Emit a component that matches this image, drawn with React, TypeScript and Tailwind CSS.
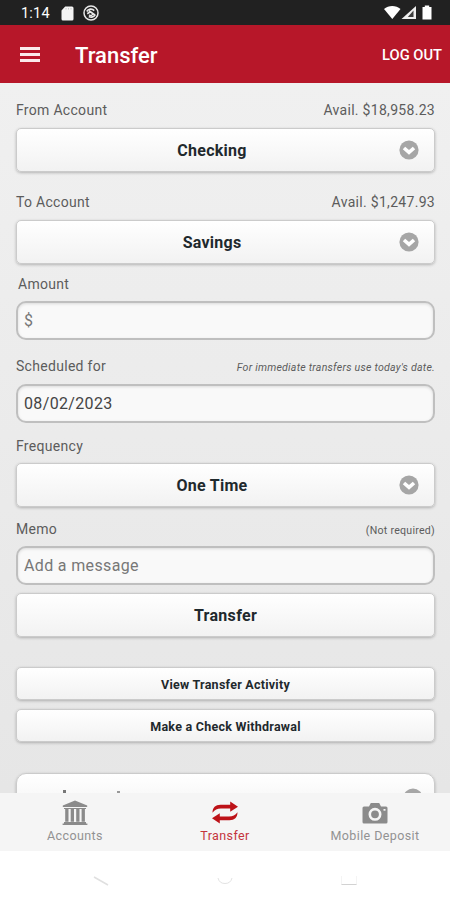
import type { ReactNode } from 'react';

const buttonBase =
  'relative flex w-full items-center justify-center border border-[#cbcbcb] bg-linear-to-b from-white to-[#f2f2f2] font-bold text-[#1f292d] shadow-[0_1px_3px_rgba(0,0,0,0.25)]';

const inputBase =
  'block h-[39px] w-full rounded-[10px] border-2 border-[#bfbfbf] bg-[#f9f9f9] px-1.5 text-[16px] tracking-[0.35px] text-[#444] shadow-[inset_0_1px_3px_rgba(0,0,0,0.12)] outline-none placeholder:text-[#777]';

function ChevronCircle() {
  return (
    <svg className="h-5 w-5" viewBox="0 0 20 20">
      <circle cx="10" cy="10" r="9.6" fill="#a6a6a6" />
      <path d="M5 8 10 12.4 15 8" fill="none" stroke="#fff" strokeWidth="3.6" />
    </svg>
  );
}

// Row above a field, with an optional note on the right
function LabelRow({ label, children }: { label: string; children?: ReactNode }) {
  return (
    <div className="flex h-5 items-center justify-between text-[14px] tracking-[0.3px] text-[#5c5c5c]">
      <span>{label}</span>
      {children}
    </div>
  );
}

function SelectButton({ value }: { value: string }) {
  return (
    <button className={`${buttonBase} h-11 rounded-[5px] pr-[27px] pt-0.5 text-[16px] tracking-[0.25px]`}>
      {value}
      <span className="absolute right-[15px] top-[11px]">
        <ChevronCircle />
      </span>
    </button>
  );
}

function StatusBar() {
  return (
    <div className="flex h-[25px] shrink-0 items-center bg-[#212121] pl-[21px] pr-[17px] text-white">
      <span className="w-[40px] pt-0.5 text-[14.5px] tracking-[0.2px]">1:14</span>
      <svg className="mt-px h-[15px] w-[13px]" viewBox="0 0 13 15">
        <path d="M4.2 0.5H11a1.5 1.5 0 0 1 1.5 1.5v11a1.5 1.5 0 0 1-1.5 1.5H2A1.5 1.5 0 0 1 .5 13V4.4z" fill="#f5f5f5" />
        <path d="M5 2v1.5M7.5 2v1.5M10 2v1.5" stroke="#bbb" strokeWidth=".8" />
      </svg>
      <svg className="ml-[9px] h-4 w-4" viewBox="0 0 16 16" fill="none" stroke="#e8e8e8">
        <circle cx="8" cy="8" r="7" strokeWidth="1.5" />
        <path d="M3.8 6.5C5.2 4 9 3.2 11.2 5.6M12.2 9.6c-1.2 2.4-4 3.2-6.4 1.8M4.2 8.8l2.4-1.6M6 5.8l6.2 4.4" strokeWidth="1.7" />
        <path d="M9.8 8.2a2.2 2.2 0 0 1-3.8 1.6" strokeWidth="1.3" />
      </svg>
      <svg className="ml-auto h-[15px] w-[50px]" viewBox="0 0 50 15">
        <path d="M1 3.9C5.5-.1 13-.1 17.5 3.9L9.3 14z" fill="#fff" />
        <path d="M33 1v13H18.5z" fill="#eee" />
        <path d="M30.5 5.5V12h-5.7z" fill="#3c3c3c" />
        <path d="M39.5 2h2.3V.5h4.4V2h2.3v12.5h-9z" fill="#fff" />
      </svg>
    </div>
  );
}

function Header() {
  return (
    <header className="flex h-[58px] shrink-0 items-center bg-[#b71729] pl-5 pr-2 text-white">
      <button className="flex w-5 flex-col gap-[3px]" aria-label="Menu">
        <span className="h-[3px] bg-[#fbe9ea]" />
        <span className="h-[3px] bg-[#fbe9ea]" />
        <span className="h-[3px] bg-[#fbe9ea]" />
      </button>
      <h1 className="ml-[35px] mt-0.5 text-[22px] font-medium">Transfer</h1>
      <button className="ml-auto mt-0.5 text-[14.7px] font-medium">LOG OUT</button>
    </header>
  );
}

function BankIcon() {
  return (
    <svg className="h-[26px] w-[26px]" viewBox="0 0 26 26" fill="#8b8b8b">
      <path d="M13 .5 25.2 5.5V7H.8V5.5zM2 8h22v1H2zM3.2 9h3.3v12.7H3.2zM8.7 9H12v12.7H8.7zM14.2 9h3.3v12.7h-3.3zM19.6 9h3.3v12.7h-3.3zM2 22h22v1.5H2zM.6 23.500h24.8V25H.6z" />
    </svg>
  );
}

function TransferIcon() {
  return (
    <svg className="h-[26px] w-[28px]" viewBox="0 0 28 26" fill="#bd1218">
      <path d="M1.5 12.800C1.5 7.500 4.500 4.800 9.500 4.800h9.700V1.500L27 6.800l-7.800 5V8.600H10C6 8.600 4 9.800 1.500 12.800z" />
      <path d="M26.5 12.200c0 5.300-3 8-8 8H8.800v3.300L1 18.200l7.800-5v3.200H18c4 0 6-1.200 8.500-4.200z" />
    </svg>
  );
}

function CameraIcon() {
  return (
    <svg className="h-[26px] w-[26px]" viewBox="0 0 26 26">
      <path d="M2 6.500h5L8.800 3h8.400L19 6.500h5A1.500 1.500 0 0 1 25.500 8v14a1.500 1.500 0 0 1-1.500 1.500H2A1.500 1.500 0 0 1 .5 22V8A1.500 1.500 0 0 1 2 6.500z" fill="#8b8b8b" />
      <circle cx="13" cy="14.300" r="5.200" fill="none" stroke="#f5f5f5" strokeWidth="2.600" />
      <path d="M21.500 9h2v1.700h-2z" fill="#f5f5f5" />
    </svg>
  );
}

function Tab({ label, icon, active }: { label: string; icon: ReactNode; active?: boolean }) {
  return (
    <button
      className={`flex flex-1 flex-col items-center pt-[7px] text-[12.5px] tracking-[0.4px] ${
        active ? 'text-[#c4343c]' : 'text-[#929292]'
      }`}
    >
      {icon}
      <span className="mt-px leading-[18px]">{label}</span>
    </button>
  );
}

export default function App() {
  return (
    <div className="flex h-[900px] w-[450px] flex-col overflow-hidden bg-white font-[Roboto,sans-serif]">
      <StatusBar />
      <Header />

      <main className="h-[710px] shrink-0 overflow-hidden bg-linear-to-b from-[#f0f0f0] to-[#e6e6e6] pl-4 pr-[15px] pt-[17px]">
        <LabelRow label="From Account">
          <span>Avail. $18,958.23</span>
        </LabelRow>
        <div className="mt-2">
          <SelectButton value="Checking" />
        </div>

        <div className="mt-5">
          <LabelRow label="To Account">
            <span>Avail. $1,247.93</span>
          </LabelRow>
        </div>
        <div className="mt-2">
          <SelectButton value="Savings" />
        </div>

        <div className="mt-2.5 pl-0.5">
          <LabelRow label="Amount" />
        </div>
        <div className="mt-[7px]">
          <input className={inputBase} placeholder="$" />
        </div>

        <div className="mt-4">
          <LabelRow label="Scheduled for">
            <span className="mt-[3px] text-[10.6px] italic tracking-[0.23px]">
              For immediate transfers use today's date.
            </span>
          </LabelRow>
        </div>
        <div className="mt-2">
          <input className={inputBase} defaultValue="08/02/2023" />
        </div>

        <div className="mt-[13px]">
          <LabelRow label="Frequency" />
        </div>
        <div className="mt-[7px]">
          <SelectButton value="One Time" />
        </div>

        <div className="mt-3">
          <LabelRow label="Memo">
            <span className="mt-[3px] text-[10.6px] tracking-[0.25px]">(Not required)</span>
          </LabelRow>
        </div>
        <div className="mt-[7px]">
          <input className={inputBase} placeholder="Add a message" />
        </div>

        <button className={`${buttonBase} mt-2 h-11 rounded-[5px] pt-0.5 text-[16px] tracking-[0.3px]`}>
          Transfer
        </button>
        <button className={`${buttonBase} mt-[30px] h-[33px] rounded-[5px] pt-1 text-[12.5px] tracking-[0.25px]`}>
          View Transfer Activity
        </button>
        <button className={`${buttonBase} mt-[9px] h-[33px] rounded-[5px] pt-1 text-[12.5px] tracking-[0.25px]`}>
          Make a Check Withdrawal
        </button>

        {/* Next section, mostly hidden behind the tab bar */}
        <div className={`${buttonBase} mt-[31px] h-11 rounded-[10px]`}>
          <span className="absolute left-[46px] top-4 h-3 w-[3px] bg-[#777]" />
          <span className="absolute left-[100px] top-[17px] h-3 w-[3px] bg-[#999]" />
          <span className="absolute right-[11px] top-3.5">
            <ChevronCircle />
          </span>
        </div>
      </main>

      <nav className="flex h-[58px] shrink-0 bg-[#f5f5f5]">
        <Tab label="Accounts" icon={<BankIcon />} />
        <Tab label="Transfer" icon={<TransferIcon />} active />
        <Tab label="Mobile Deposit" icon={<CameraIcon />} />
      </nav>

      <div className="flex flex-1 justify-between px-[92px] pt-[23px]">
        <svg className="h-4 w-[18px]" viewBox="0 0 18 16">
          <path d="M2 3l14 8" stroke="#e0e0e0" strokeWidth="1.5" />
        </svg>
        <svg className="h-4 w-4" viewBox="0 0 16 16">
          <path d="M1 4a7.2 7.2 0 0 0 14 0" fill="none" stroke="#e3e3e3" />
        </svg>
        <svg className="h-4 w-[18px]" viewBox="0 0 18 16">
          <path d="M1.5 2v8.500h15V2" fill="none" stroke="#f4f4f4" />
          <path d="M1.5 10.500h15" stroke="#d2d2d2" />
        </svg>
      </div>
    </div>
  );
}
